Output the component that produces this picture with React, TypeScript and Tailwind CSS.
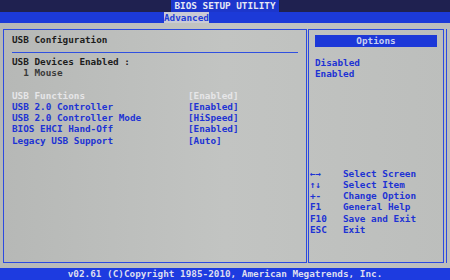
import React from "react";

const ROWS: { label: string; value: string; active?: boolean }[] = [
  { label: "USB Functions", value: "[Enabled]", active: true },
  { label: "USB 2.0 Controller", value: "[Enabled]" },
  { label: "USB 2.0 Controller Mode", value: "[HiSpeed]" },
  { label: "BIOS EHCI Hand-Off", value: "[Enabled]" },
  { label: "Legacy USB Support", value: "[Auto]" },
];

const KEYS: { key: string; desc: string }[] = [
  { key: "←→", desc: "Select Screen" },
  { key: "↑↓", desc: "Select Item" },
  { key: "+-", desc: "Change Option" },
  { key: "F1", desc: "General Help" },
  { key: "F10", desc: "Save and Exit" },
  { key: "ESC", desc: "Exit" },
];

export default function App() {
  return (
    <div className="w-[450px] h-[280px] flex flex-col overflow-hidden bg-gradient-to-r from-[#b6b8b6] via-[#c2c4c2] to-[#bcbebc] font-['DejaVu_Sans_Mono','Liberation_Mono',monospace] text-[9.33px] leading-[11.2px] font-bold whitespace-pre">
      {/* title bar */}
      <div className="h-[12px] bg-[#1f2150] flex justify-center">
        <span className="bg-[#1c36cc] text-[#e6e8f4] px-[3px] leading-[12px]">BIOS SETUP UTILITY</span>
      </div>
      {/* tabs */}
      <div className="h-[11px] bg-[#1c3ad8] flex pl-[164px]">
        <span className="w-[45px] bg-[#c9cbd6] text-[#1f3ed8] leading-[11px]">Advanced</span>
      </div>

      {/* body */}
      <div className="flex-1 flex px-[3px] pt-[6px] pb-[5px]">
        {/* left panel */}
        <div className="w-[304px] border border-[#2c4ae0] flex flex-col pl-[8px] pt-[4px]">
          <div className="text-[#1c1c1c]">USB Configuration</div>
          <div className="mt-[7px] mb-[3px] h-px w-[286px] bg-[#3050e0]" />
          <div className="text-[#1c1c1c]">USB Devices Enabled :</div>
          <div className="text-[#3a3a3a]">  1 Mouse</div>
          <div className="h-[11.2px]" />
          {ROWS.map((r) => (
            <div key={r.label} className={`flex ${r.active ? "text-[#e6e6e8]" : "text-[#1d33d4]"}`}>
              <span className="w-[176px]">{r.label}</span>
              <span>{r.value}</span>
            </div>
          ))}
        </div>

        {/* right panel */}
        <div className="flex-1 ml-[1px] pr-[2px] border-r border-[#2c4ae0] flex">
          <div className="flex-1 border border-[#2c4ae0] flex flex-col">
            <div className="mt-[5px] mx-[6px] h-[12px] bg-[#1c38d8] text-center text-[#c8d0f2] leading-[12px]">Options</div>
            <div className="mt-[10px] pl-[6px] text-[#1d33d4]">
              <div>Disabled</div>
              <div>Enabled</div>
            </div>
            <div className="mt-auto mb-[27px] pl-[1px] text-[#1d33d4]">
              {KEYS.map((k) => (
                <div key={k.key} className="flex">
                  <span className="w-[33px]">{k.key}</span>
                  <span>{k.desc}</span>
                </div>
              ))}
            </div>
          </div>
        </div>
      </div>

      {/* footer */}
      <div className="h-[12px] bg-[#1d3be0] text-center text-[#dcdef0] leading-[12px]">
        v02.61 (C)Copyright 1985-2010, American Megatrends, Inc.
      </div>
    </div>
  );
}
